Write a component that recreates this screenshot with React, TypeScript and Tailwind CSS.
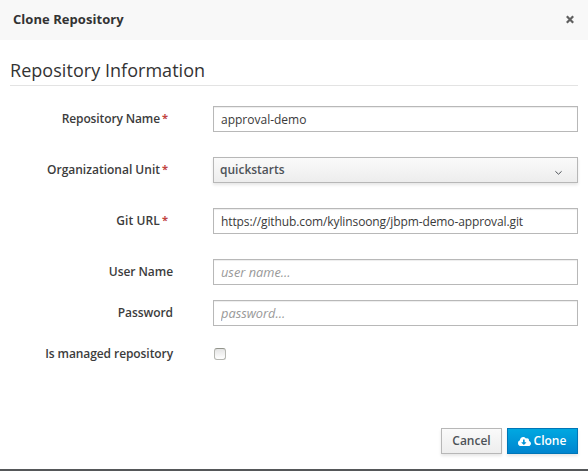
import { FaCloudDownloadAlt } from "react-icons/fa";

type LabelProps = { text: string; required?: boolean; tracking?: string };

function Label({ text, required, tracking = "tracking-[-0.06px]" }: LabelProps) {
  return (
    <label className="flex w-[173px] shrink-0 justify-end pt-[3px] text-[12px] leading-[20px] font-semibold text-[#3c3c3c]">
      <span className={tracking}>{text}</span>
      {required && <span className="mr-[5px] ml-[2px] w-[6px] text-[11px] leading-[18px] font-bold text-[#c1433f]">*</span>}
    </label>
  );
}

const field =
  "h-[26px] w-[365px] border border-[#b8b8b8] bg-white px-[7px] text-[12px] leading-[20px] text-[#3a3a3a] outline-none shadow-[inset_0_1px_1px_rgba(0,0,0,0.075)] placeholder:text-[12.8px] placeholder:italic placeholder:text-[#999] placeholder:opacity-100";

export default function App() {
  return (
    <div className="flex h-[471px] w-[588px] flex-col overflow-hidden border-b-2 border-[#555759] bg-white font-['Open_Sans',sans-serif] text-[12px] text-[#333]">
      <header className="flex h-10 shrink-0 items-center justify-between bg-[#f8f8f8] pr-[13px] pb-[2px] pl-[13px]">
        <h4 className="text-[13px] leading-[20px] font-bold tracking-[0.05px]">Clone Repository</h4>
        <button aria-label="Close" className="text-[#606060]">
          <svg width="10" height="9" viewBox="0 0 10 9" fill="none" stroke="currentColor" strokeWidth="2.2">
            <path d="M1.8 1.2 8.2 7.8M8.2 1.2 1.8 7.8" />
          </svg>
        </button>
      </header>
      <h2 className="mx-[10px] mt-[17px] h-[29px] shrink-0 border-b border-[#e3e3e3] text-[18px] leading-[26px] tracking-[0.04px]">
        Repository Information
      </h2>
      <form className="flex flex-col pt-5">
        <div className="flex h-[51px] items-start gap-10">
          <Label text="Repository Name" required tracking="tracking-[-0.12px]" />
          <input className={field} defaultValue="approval-demo" />
        </div>
        <div className="flex h-[51px] items-start gap-10">
          <Label text="Organizational Unit" required tracking="tracking-normal" />
          <button
            type="button"
            className="flex h-[26px] w-[365px] items-center justify-between border border-[#b7b7b7] bg-linear-to-b from-[#fafafa] to-[#ededed] pr-[14px] pl-[6px] font-semibold text-[#4d5258] shadow-[0_2px_3px_rgba(0,0,0,0.1)]"
          >
            <span>quickstarts</span>
            <svg className="mt-[6px]" width="9" height="6" viewBox="0 0 9 6" fill="none" stroke="currentColor" strokeWidth="1">
              <path d="M1.4 1.3 4.5 4.2 7.6 1.3" />
            </svg>
          </button>
        </div>
        <div className="flex h-[51px] items-start gap-10">
          <Label text="Git URL" required tracking="tracking-[0.1px]" />
          <input className={`${field} tracking-[-0.11px]`} defaultValue="https://github.com/kylinsoong/jbpm-demo-approval.git" />
        </div>
        <div className="flex h-[41px] items-start gap-10">
          <Label text="User Name" />
          <input className={field} placeholder="user name..." />
        </div>
        <div className="flex h-[41px] items-start gap-10">
          <Label text="Password" />
          <input className={field} type="password" placeholder="password..." />
        </div>
        <div className="flex h-[26px] items-start gap-10">
          <Label text="Is managed repository" tracking="tracking-[-0.08px]" />
          <input
            type="checkbox"
            className="mt-[7px] ml-px h-3 w-3 appearance-none rounded-[3px] border border-[#b5b6b1] border-t-[#92948b] bg-linear-to-b from-[#e4e4e4] to-white"
          />
        </div>
      </form>
      <footer className="mt-auto mb-[15px] flex justify-end gap-[5px] pr-[10px]">
        <button className="h-[26px] w-[61px] border border-[#b7b7b7] bg-linear-to-b from-[#fafafa] to-[#ededed] font-semibold text-[#4d5258] shadow-[0_2px_3px_rgba(0,0,0,0.1)]">
          Cancel
        </button>
        <button className="flex h-[26px] w-[71px] items-center justify-center gap-[3px] border border-[#0076b7] bg-linear-to-b from-[#00a8e1] to-[#0085cf] pr-px font-semibold text-white shadow-[0_2px_3px_rgba(0,0,0,0.1)]">
          <FaCloudDownloadAlt size={13} />
          Clone
        </button>
      </footer>
    </div>
  );
}
